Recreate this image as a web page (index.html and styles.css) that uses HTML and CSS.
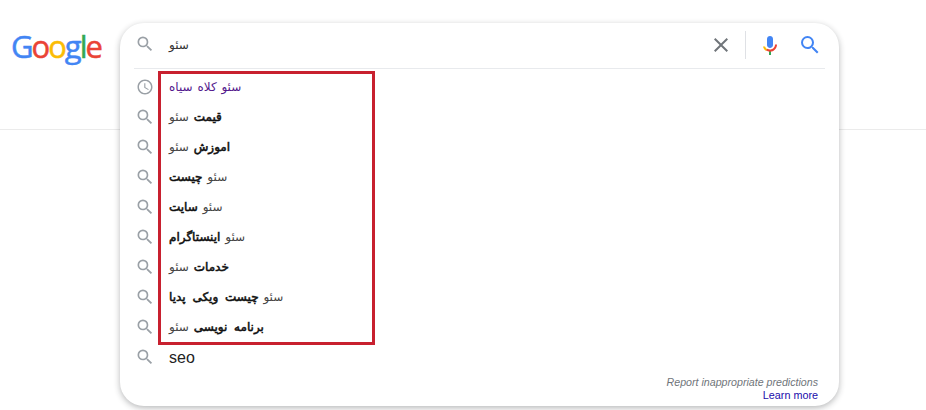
FILE: index.html
```html
<!DOCTYPE html>
<html lang="en">
<head>
<meta charset="utf-8">
<title>Google</title>
<link rel="stylesheet" href="styles.css">
</head>
<body>
<header class="header">
  <div class="logo"><span class="blue">G</span><span class="red">o</span><span class="yellow">o</span><span class="blue">g</span><span class="green">l</span><span class="red">e</span></div>
  <div class="card">
    <div class="searchbar">
      <svg class="icon-search" viewBox="0 0 24 24"><use href="#s"/></svg>
      <div class="query" dir="rtl">سئو</div>
      <svg class="icon-close" viewBox="0 0 24 24"><path fill="#70757a" d="M19 6.41 17.59 5 12 10.59 6.41 5 5 6.41 10.59 12 5 17.59 6.41 19 12 13.41 17.59 19 19 17.59 13.41 12z"/></svg>
      <span class="vsep"></span>
      <svg class="icon-mic" viewBox="0 0 24 24">
        <path fill="#4285f4" d="M12 15c1.66 0 3-1.31 3-2.97V5.97C15 4.31 13.66 3 12 3S9 4.31 9 5.97v6.06C9 13.69 10.34 15 12 15z"/>
        <path fill="#34a853" d="M11 18.08h2V22h-2z"/>
        <path fill="#fbbc05" d="M7.05 13.5 5 13.5c.5 2.2 1.6 3.6 3.3 4.4l1.1-1.8c-1.2-.5-2-1.4-2.35-2.6z"/>
        <path fill="#ea4335" d="M19 11.5h-2c0 2.8-2.2 5-5 5-1 0-1.9-.3-2.7-.7l-1.1 1.8c1 .7 2.3 1.1 3.8 1.1 3.9 0 7-3.2 7-7.2z"/>
      </svg>
      <svg class="icon-go" viewBox="0 0 24 24"><path fill="#4285f4" d="M15.5 14h-.79l-.28-.27A6.47 6.47 0 0 0 16 9.5 6.5 6.5 0 1 0 9.5 16c1.61 0 3.09-.59 4.23-1.57l.27.28v.79l5 4.99L20.49 19l-4.99-5zm-6 0C7.01 14 5 11.99 5 9.5S7.01 5 9.5 5 14 7.01 14 9.5 11.99 14 9.5 14z"/></svg>
    </div>
    <ul class="list">
      <li class="row">
        <span class="icon-box"><svg class="icon-clock" viewBox="0 0 24 24"><path fill="#9aa0a6" d="M11.99 2C6.47 2 2 6.48 2 12s4.47 10 9.99 10C17.52 22 22 17.52 22 12S17.52 2 11.99 2zM12 20c-4.42 0-8-3.58-8-8s3.58-8 8-8 8 3.58 8 8-3.58 8-8 8zm.5-13H11v6l5.25 3.15.75-1.23-4.5-2.67z"/></svg></span>
        <span class="fa visited" dir="rtl">سئو کلاه سیاه</span>
      </li>
      <li class="row"><span class="icon-box"><svg class="icon-row" viewBox="0 0 24 24"><use href="#s"/></svg></span><span class="fa" dir="rtl"><b>قیمت</b> سئو</span></li>
      <li class="row"><span class="icon-box"><svg class="icon-row" viewBox="0 0 24 24"><use href="#s"/></svg></span><span class="fa" dir="rtl"><b>اموزش</b> سئو</span></li>
      <li class="row"><span class="icon-box"><svg class="icon-row" viewBox="0 0 24 24"><use href="#s"/></svg></span><span class="fa" dir="rtl">سئو <b>چیست</b></span></li>
      <li class="row"><span class="icon-box"><svg class="icon-row" viewBox="0 0 24 24"><use href="#s"/></svg></span><span class="fa" dir="rtl">سئو <b>سایت</b></span></li>
      <li class="row"><span class="icon-box"><svg class="icon-row" viewBox="0 0 24 24"><use href="#s"/></svg></span><span class="fa" dir="rtl">سئو <b>اینستاگرام</b></span></li>
      <li class="row"><span class="icon-box"><svg class="icon-row" viewBox="0 0 24 24"><use href="#s"/></svg></span><span class="fa" dir="rtl"><b>خدمات</b> سئو</span></li>
      <li class="row"><span class="icon-box"><svg class="icon-row" viewBox="0 0 24 24"><use href="#s"/></svg></span><span class="fa" dir="rtl">سئو <b>چیست ویکی پدیا</b></span></li>
      <li class="row"><span class="icon-box"><svg class="icon-row" viewBox="0 0 24 24"><use href="#s"/></svg></span><span class="fa" dir="rtl"><b>برنامه نویسی</b> سئو</span></li>
      <li class="row"><span class="icon-box"><svg class="icon-row" viewBox="0 0 24 24"><use href="#s"/></svg></span><span class="en">seo</span></li>
    </ul>
    <div class="foot">
      <div class="report">Report inappropriate predictions</div>
      <a class="learn" href="#">Learn more</a>
    </div>
    <div class="highlight"></div>
  </div>
</header>
<svg class="defs" width="0" height="0"><defs><path id="s" fill="#9aa0a6" d="M15.5 14h-.79l-.28-.27A6.47 6.47 0 0 0 16 9.5 6.5 6.5 0 1 0 9.5 16c1.61 0 3.09-.59 4.23-1.57l.27.28v.79l5 4.99L20.49 19l-4.99-5zm-6 0C7.01 14 5 11.99 5 9.5S7.01 5 9.5 5 14 7.01 14 9.5 11.99 14 9.5 14z"/></defs></svg>
</body>
</html>
```
FILE: styles.css
```css
* { box-sizing: border-box; }
html, body { margin: 0; padding: 0; height: 100%; overflow: hidden; background: #fff; }
body { font-family: "Liberation Sans", "DejaVu Sans", sans-serif; color: #202124; }
.header {
  display: flex;
  align-items: flex-start;
  height: 130px;
  padding-top: 23px;
  border-bottom: 1px solid #ebebeb;
}
.logo {
  flex: none;
  width: 120px;
  padding: 0 0 0 11px;
  font-family: "Open Sans", sans-serif;
  font-size: 31px;
  line-height: 46px;
  letter-spacing: -2px;
  -webkit-text-stroke: 0.5px currentColor;
}
.blue { color: #4285f4; }
.red { color: #ea4335; }
.yellow { color: #fbbc05; }
.green { color: #34a853; }
.card {
  position: relative;
  flex: none;
  width: 719px;
  height: 383px;
  background: #fff;
  border-radius: 24px;
  box-shadow: 0 2px 6px rgba(32, 33, 36, 0.32);
  z-index: 1;
}
.searchbar {
  display: flex;
  align-items: center;
  height: 46px;
  margin: 0 14px;
  padding-bottom: 1px;
  border-bottom: 1px solid #e8eaed;
}
.icon-search { flex: none; width: 20px; height: 20px; margin: -2px 0 0 1px; }
.query { flex: 1; margin-left: 14px; font-size: 12px; unicode-bidi: plaintext; text-align: left; font-family: "DejaVu Sans", sans-serif; color: #333; }
.icon-close { flex: none; width: 24px; height: 24px; margin-right: 12px; }
.vsep { flex: none; width: 1px; height: 28px; background: #dfe1e5; margin-right: 12px; }
.icon-mic { flex: none; width: 24px; height: 24px; margin-right: 16px; }
.icon-go { flex: none; width: 24px; height: 24px; margin-right: 3px; }
.list { list-style: none; margin: 3px 0 0; padding: 0 0 0 14px; }
.row { display: flex; align-items: center; height: 30px; }
.icon-box { flex: none; width: 20px; height: 20px; margin-right: 15px; display: flex; align-items: center; justify-content: center; }
.icon-row { flex: none; width: 20px; height: 20px; margin-left: 1px; }
.icon-clock { flex: none; width: 18px; height: 18px; margin-left: 1px; }
.fa { font-size: 12px; line-height: 16px; margin-top: -1px; color: #444; font-family: "DejaVu Sans", sans-serif; word-spacing: 1px; }
.fa b { font-weight: 400; color: #111; -webkit-text-stroke: 0.55px #111; word-spacing: 3px; }
.fa.visited { color: #52188c; }
.en { font-size: 16px; color: #222; margin-top: 2px; }
.foot { text-align: right; padding: 4px 21px 0 0; font-size: 10.65px; line-height: 13px; }
.report { color: #70757a; font-style: italic; }
.learn { color: #1a0dab; text-decoration: none; font-size: 10.8px; }
.highlight {
  position: absolute;
  left: 38px;
  top: 48px;
  width: 217px;
  height: 274px;
  border: 3px solid #c8202f;
  pointer-events: none;
}
.defs { position: absolute; }
```
